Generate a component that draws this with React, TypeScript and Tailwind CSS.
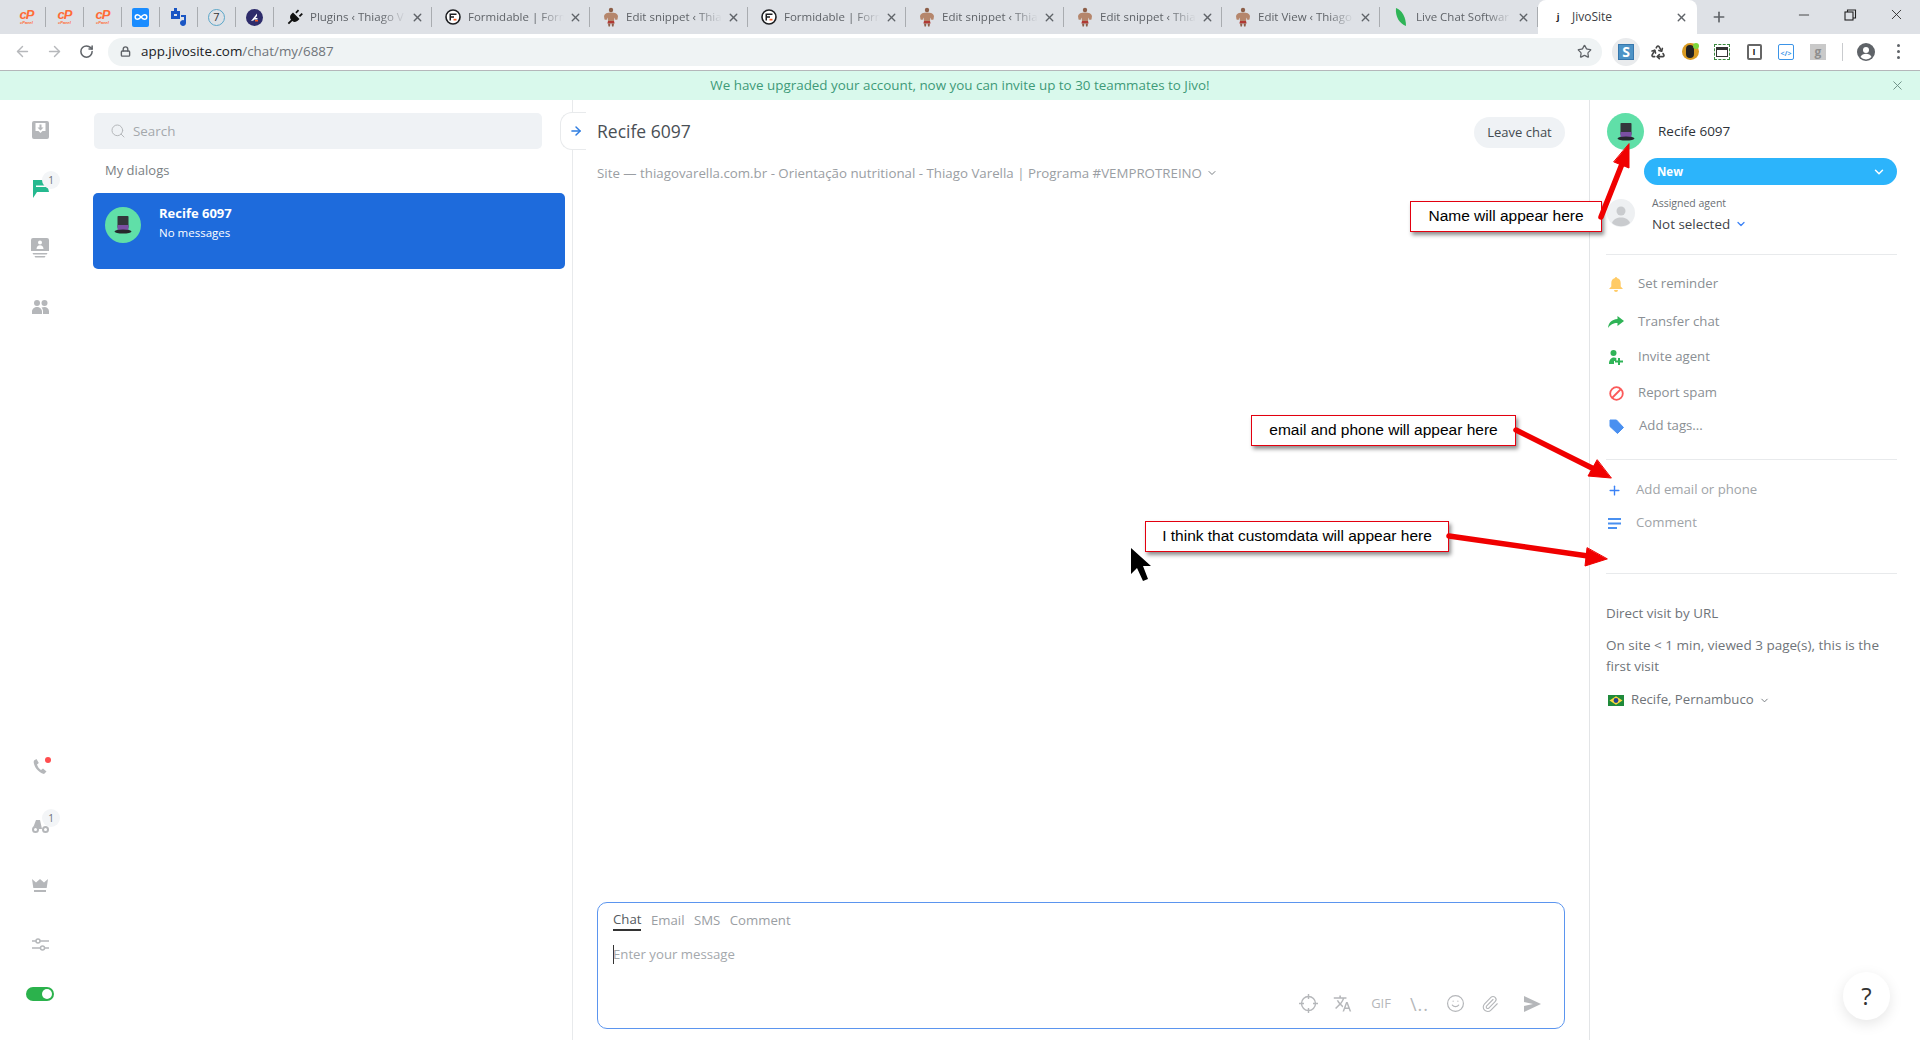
import React from 'react';
import {
  ArrowLeft,
  ArrowRight,
  ChevronDown,
  Infinity as InfinityIcon,
  Lock,
  Minus,
  Paperclip,
  Plus,
  Recycle,
  RotateCw,
  Search,
  Smile,
  Star,
  X,
} from 'lucide-react';
import { MdTranslate } from 'react-icons/md';

const Hat = ({ size = 20 }: { size?: number }) => (
  <svg width={size} height={size} viewBox="0 0 20 20">
    <rect x="4.5" y="1" width="11" height="12" rx="0.8" fill="#33363b" />
    <rect x="4.5" y="10" width="11" height="6" fill="#7b4fa3" />
    <ellipse cx="10" cy="16.5" rx="8.5" ry="2" fill="#26282c" />
  </svg>
);

const CPanel = () => (
  <div className="flex flex-col items-center leading-none text-[#ff6c37]">
    <span className="font-['Liberation_Sans',sans-serif] text-[13px] font-bold italic tracking-[-1px] leading-[11px]">cP</span>
    <span className="font-['Liberation_Sans',sans-serif] text-[4px] font-bold italic leading-[5px]">cPanel</span>
  </div>
);

const Muscle = () => (
  <svg width="16" height="20" viewBox="0 0 16 20">
    <circle cx="8" cy="3" r="2.2" fill="#8d5f49" />
    <path d="M1 9c.5-2.500 3-3.500 7-3.500S14.500 6.500 15 9l-.5 3.500-2 .5-1-2.500L11 14H5l-.5-3.500-1 2.500-2-.5z" fill="#b5866c" />
    <path d="M5 14h6l.6 2.500H4.400z" fill="#b13a34" />
    <path d="M5 16.500h2.400L7 19.500H5.500zM8.600 16.500H11l-.5 3H9z" fill="#8d5f49" />
  </svg>
);

const Formidable = () => (
  <svg width="16" height="16" viewBox="0 0 16 16">
    <circle cx="8" cy="8" r="7" fill="#fff" stroke="#1d1f22" strokeWidth="1.6" />
    <path d="M4.500 4.500h7V6h-7zM4.500 7.300H9v1.500H4.500zM4.500 4.500H6v7H4.500z" fill="#1d1f22" />
    <rect x="8.5" y="9.8" width="3" height="1.7" fill="#f15a24" />
  </svg>
);

const Plug = () => (
  <svg width="18" height="18" viewBox="0 0 18 18" fill="#111">
    <path d="M7 4.500 13.500 11l-1.800 1.800c-1.600 1.500-3.900 1.500-5.400.2L3 16.300 1.700 15 5 11.700c-1.300-1.500-1.300-3.800.2-5.400z" />
    <path d="m9.300 4.200 2.600-2.800 1.300 1.300-2.700 2.700zM12.800 7.700l2.800-2.700 1.300 1.300-2.800 2.700z" />
  </svg>
);

const Leaf = () => (
  <svg width="14" height="20" viewBox="0 0 14 20">
    <path d="M2 1c6 2 10 9 10 18C6 17 1 10 2 1z" fill="#2fb457" />
  </svg>
);

const tabs = [
  { icon: <Plug />, title: 'Plugins ‹ Thiago V' },
  { icon: <Formidable />, title: 'Formidable | Form' },
  { icon: <Muscle />, title: 'Edit snippet ‹ Thia' },
  { icon: <Formidable />, title: 'Formidable | Form' },
  { icon: <Muscle />, title: 'Edit snippet ‹ Thia' },
  { icon: <Muscle />, title: 'Edit snippet ‹ Thia' },
  { icon: <Muscle />, title: 'Edit View ‹ Thiago' },
  { icon: <Leaf />, title: 'Live Chat Softwar' },
];

const Pinned = ({ children }: { children: React.ReactNode }) => (
  <div className="flex h-[34px] w-[38px] items-center justify-center">
    <div className="flex h-[20px] w-[37px] items-center justify-center border-r border-[#a9acb0]">{children}</div>
  </div>
);

const TabStrip = () => (
  <div className="flex h-[34px] shrink-0 items-center bg-[#dee1e6] pl-[8px]">
    <Pinned><CPanel /></Pinned>
    <Pinned><CPanel /></Pinned>
    <Pinned><CPanel /></Pinned>
    <Pinned>
      <div className="flex h-[19px] w-[17px] items-center justify-center rounded-[2px] bg-[#1a8cff]">
        <InfinityIcon size={14} color="#fff" strokeWidth={2.5} />
      </div>
    </Pinned>
    <Pinned>
      <svg width="18" height="20" viewBox="0 0 18 20" fill="#1a56c4">
        <path d="M1 4h3V1h3v3h3v8H1zm3 3v2h3V7z" fillRule="evenodd" />
        <path d="M11 8h5v8a3 3 0 1 1-2-2.800V10h-3z" />
      </svg>
    </Pinned>
    <Pinned>
      <div className="flex h-[17px] w-[17px] items-center justify-center rounded-full border border-[#5aa6c9] text-[11px] text-[#333]">7</div>
    </Pinned>
    <Pinned>
      <svg width="17" height="17" viewBox="0 0 17 17">
        <circle cx="8.5" cy="8.5" r="8.5" fill="#2e2c6b" />
        <path d="M5 12 11 4.500v2.500L7.500 11.500zM8 9h3.500v1.500H8z" fill="#fff" />
        <rect x="9" y="11" width="3" height="1.5" fill="#f15a24" />
      </svg>
    </Pinned>
    {tabs.map((tab, i) => (
      <div key={i} className="flex h-[34px] w-[158px] items-center">
        <div className="flex h-[20px] w-full items-center border-r border-[#a9acb0] pl-[12px] pr-[7px]">
          <div className="flex w-[18px] shrink-0 justify-center">{tab.icon}</div>
          <span className="ml-[6px] w-[100px] overflow-hidden whitespace-nowrap text-[11.5px] text-[#5f6368] [mask-image:linear-gradient(to_right,black_70%,transparent_96%)]">
            {tab.title}
          </span>
          <X size={13} strokeWidth={2.5} className="ml-auto text-[#5f6368]" />
        </div>
      </div>
    ))}
    <div className="flex h-[34px] w-[159px] shrink-0 items-center self-end rounded-t-[8px] bg-white pl-[16px] pr-[9px]">
      <div className="flex h-[14px] w-[8px] items-center justify-center text-[9px] font-bold text-[#222]">j</div>
      <span className="ml-[10px] text-[12px] text-[#3c4043]">JivoSite</span>
      <X size={13} strokeWidth={2.5} className="ml-auto text-[#5f6368]" />
    </div>
    <Plus size={16} strokeWidth={2.5} className="ml-[14px] text-[#5f6368]" />
    <div className="-mt-[5px] ml-auto flex items-center gap-[30px] pr-[15px] text-[#222]">
      <Minus size={16} strokeWidth={1.2} />
      <svg width="16" height="16" viewBox="0 0 16 16" fill="none" stroke="#222" strokeWidth="1.1">
        <rect x="3" y="5" width="8" height="8" />
        <path d="M5.500 5V3h8v8h-2.500" />
      </svg>
      <X size={17} strokeWidth={1.2} />
    </div>
  </div>
);

const ExtBox = ({ children }: { children: React.ReactNode }) => (
  <div className="flex h-[28px] w-[32px] items-center justify-center">{children}</div>
);

const Toolbar = () => (
  <div className="flex h-[37px] shrink-0 items-center border-b border-[#b5b7ba] bg-white pb-[1px]">
    <ArrowLeft size={17} strokeWidth={2} className="ml-[14px] text-[#b6b8bb]" />
    <ArrowRight size={17} strokeWidth={2} className="ml-[15px] text-[#b6b8bb]" />
    <RotateCw size={15} strokeWidth={2.4} className="ml-[16px] text-[#5f6368]" />
    <div className="ml-[14px] flex h-[28px] w-[1494px] items-center rounded-full bg-[#eff3f4] pl-[12px] pr-[10px]">
      <Lock size={11} strokeWidth={3} className="text-[#5f6368]" />
      <span className="ml-[10px] text-[13.4px] text-[#202124]">
        app.jivosite.com<span className="text-[#70757a]">/chat/my/6887</span>
      </span>
      <Star size={15} strokeWidth={2} className="ml-auto text-[#5f6368]" />
    </div>
    <div className="ml-[10px] flex items-center">
      <div className="mr-[2px] flex h-[28px] w-[28px] items-center justify-center rounded-full bg-[#e9ebed]">
        <div className="flex h-[16px] w-[16px] items-center justify-center border border-[#3677ad] bg-[#4d93c6] text-[14px] font-bold leading-none text-white">S</div>
      </div>
      <ExtBox><Recycle size={16} strokeWidth={2.4} className="text-[#444]" /></ExtBox>
      <ExtBox>
        <div className="relative h-[17px] w-[17px] rounded-full bg-[#d99a20]">
          <div className="absolute left-[4px] top-[2px] h-[13px] w-[8px] rounded-sm bg-[#222]" />
          <div className="absolute right-0 top-0 h-[6px] w-[6px] rounded-full bg-[#7cd63b]" />
        </div>
      </ExtBox>
      <ExtBox>
        <div className="flex h-[16px] w-[16px] items-center justify-center border border-dashed border-[#3d8b40]">
          <div className="h-[10px] w-[12px] border border-t-[3px] border-[#333] bg-white" />
        </div>
      </ExtBox>
      <ExtBox>
        <div className="flex h-[16px] w-[15px] items-center justify-center rounded-[2px] border-2 border-[#666] text-[9px] font-bold leading-none text-[#222]">I</div>
      </ExtBox>
      <ExtBox>
        <div className="flex h-[16px] w-[16px] items-end justify-center rounded-[2px] border border-[#3b94e8] text-[7px] font-bold leading-[11px] text-[#3b94e8]">{'</>'}</div>
      </ExtBox>
      <ExtBox>
        <div className="flex h-[16px] w-[16px] items-center justify-center bg-[#c9c9c9] text-[12px] font-bold leading-none text-[#8e8e8e]">g</div>
      </ExtBox>
      <div className="ml-[8px] h-[18px] w-px bg-[#c9cbce]" />
      <svg width="18" height="18" viewBox="0 0 18 18" className="ml-[14px]">
        <circle cx="9" cy="9" r="9" fill="#5f6368" />
        <circle cx="9" cy="7" r="3" fill="#fff" />
        <path d="M3.500 14c1-2.500 3-3.300 5.500-3.300s4.500.8 5.500 3.300A7.500 7.500 0 0 1 9 16.500 7.500 7.500 0 0 1 3.500 14z" fill="#fff" />
      </svg>
      <div className="ml-[22px] flex flex-col gap-[3px]">
        <div className="h-[3px] w-[3px] rounded-full bg-[#5f6368]" />
        <div className="h-[3px] w-[3px] rounded-full bg-[#5f6368]" />
        <div className="h-[3px] w-[3px] rounded-full bg-[#5f6368]" />
      </div>
    </div>
  </div>
);

const RailItem = ({ children }: { children: React.ReactNode }) => (
  <div className="relative flex h-[59px] w-full items-center justify-center">{children}</div>
);

const Badge = () => (
  <div className="absolute left-[42px] top-[12px] flex h-[18px] w-[18px] items-center justify-center rounded-full bg-[#f3f5f7] text-[10px] text-[#6b7075]">1</div>
);

const Rail = () => (
  <div className="flex w-[82px] shrink-0 flex-col justify-between pb-[39px] pr-[2px]">
    <div>
      <RailItem>
        <svg width="17" height="18" viewBox="0 0 17 18">
          <path d="M2 0h13a2 2 0 0 1 2 2v14a2 2 0 0 1-2 2H2a2 2 0 0 1-2-2V2a2 2 0 0 1 2-2zm1.500 2v8h3l2 2 2-2h3V2z" fill="#b5b7ba" fillRule="evenodd" />
          <path d="M7.500 3.500h2v3h2l-3 3-3-3h2z" fill="#b5b7ba" />
        </svg>
      </RailItem>
      <RailItem>
        <svg width="17" height="18" viewBox="0 0 17 18" className="mt-[1px]">
          <path d="M1 0h13l3 12H5l-4 6z" fill="#25b98f" />
          <path d="M4 5.500h13V7H4z" fill="#fff" />
        </svg>
        <Badge />
      </RailItem>
      <RailItem>
        <svg width="18" height="20" viewBox="0 0 18 20" fill="#b5b7ba">
          <path d="M2 0h14a2 2 0 0 1 2 2v11H0V2a2 2 0 0 1 2-2zm7 2.500a2 2 0 1 0 0 4 2 2 0 0 0 0-4zM5.500 11h7c0-2.500-1.500-3.800-3.500-3.800S5.500 8.500 5.500 11z" fillRule="evenodd" />
          <path d="M1.500 15h15l-.8 1.600H2.300zM3.500 18h11l-.8 1.600H4.300z" />
        </svg>
      </RailItem>
      <RailItem>
        <svg width="17" height="14" viewBox="0 0 17 14" fill="#b5b7ba">
          <circle cx="5" cy="3" r="3" />
          <circle cx="12.5" cy="3" r="3" />
          <path d="M0 14v-2.500C0 8.800 2.500 7 5 7s5 1.800 5 4.500V14zM11 14v-2.500c0-1.600-.6-2.900-1.500-3.900.9-.4 2-.6 3-.6 2.300 0 4.500 1.700 4.500 4.200V14z" />
        </svg>
      </RailItem>
    </div>
    <div className="flex flex-col items-center">
      <RailItem>
        <svg width="14" height="15" viewBox="0 0 14 15" fill="#b5b7ba" className="-mt-[2px]">
          <path d="M3.500 0 1 1.500C-.5 5 4 13.500 11 15l2.500-2.500L10 9.500 8 11C6.300 10 4.500 7.500 4 5.500L5.800 4z" />
        </svg>
        <div className="absolute left-[45px] top-[19px] h-[6px] w-[6px] rounded-full bg-[#ff4d4f]" />
      </RailItem>
      <RailItem>
        <svg width="17" height="13" viewBox="0 0 17 13">
          <circle cx="3.500" cy="9.500" r="2.500" fill="none" stroke="#b5b7ba" strokeWidth="2" />
          <circle cx="13.500" cy="9.500" r="2.500" fill="none" stroke="#b5b7ba" strokeWidth="2" />
          <path d="M1 8 4 0h4l2 9H6.500a3 3 0 0 0-5.500-1z" fill="#b5b7ba" />
        </svg>
        <Badge />
      </RailItem>
      <RailItem>
        <svg width="16" height="13" viewBox="0 0 16 13" fill="#b5b7ba">
          <path d="M0 0l4 3.500L8 0l4 3.500L16 0l-1.300 9H1.300z" />
          <rect x="2" y="11" width="12" height="2" />
        </svg>
      </RailItem>
      <RailItem>
        <svg width="17" height="15" viewBox="0 0 17 15" fill="none" stroke="#b5b7ba" strokeWidth="1.5">
          <path d="M0 4h4M8 4h9M0 11h8.500M12.500 11H17" />
          <circle cx="6" cy="4" r="2" />
          <circle cx="10.5" cy="11" r="2" />
        </svg>
      </RailItem>
      <div className="mt-[13px] flex h-[14px] w-[28px] items-center justify-end rounded-full bg-[#2bb24c] pr-[2px]">
        <div className="h-[10px] w-[10px] rounded-full bg-white" />
      </div>
    </div>
  </div>
);

const DialogList = () => (
  <div className="w-[491px] shrink-0 border-r border-[#e8eaec]">
    <div className="ml-[12px] mt-[13px] flex h-[36px] w-[448px] items-center rounded-[5px] bg-[#eff2f5] pl-[16px]">
      <Search size={16} strokeWidth={1.5} className="text-[#b5b8bb]" />
      <span className="ml-[7px] text-[13.4px] text-[#a4a8ac]">Search</span>
    </div>
    <p className="ml-[23px] mt-[10px] text-[13px] leading-[22px] text-[#7a7f84]">My dialogs</p>
    <div className="ml-[11px] mt-[12px] flex h-[76px] w-[472px] rounded-[5px] bg-[#1e6bdc] pl-[12px] pt-[14px] text-white">
      <div className="flex h-[36px] w-[36px] items-center justify-center rounded-full bg-[#60dfa8]">
        <Hat size={20} />
      </div>
      <div className="ml-[18px]">
        <p className="-mt-[4px] text-[13px] font-bold leading-[20px]">Recife 6097</p>
        <p className="mt-[1px] text-[11.5px] leading-[18px]">No messages</p>
      </div>
    </div>
  </div>
);

const ChatPanel = () => (
  <div className="relative flex min-w-0 flex-1 flex-col px-[24px]">
    <div className="absolute -left-[13px] top-[12px] flex h-[38px] w-[26px] items-center rounded-l-[12px] border-y border-l border-[#e8eaec] bg-white pl-[8px]">
      <ArrowRight size={14} strokeWidth={2.5} className="text-[#2f7de1]" />
    </div>
    <div className="flex items-start justify-between pt-[17px]">
      <h1 className="mt-[2px] text-[17.5px] font-medium leading-[24px] text-[#4a4f55]">Recife 6097</h1>
      <div className="flex h-[31px] w-[91px] items-center justify-center rounded-full bg-[#eff2f5] text-[13px] font-medium text-[#444a50]">Leave chat</div>
    </div>
    <div className="mt-[15px] flex items-center text-[13.3px] leading-[20px] text-[#9a9ea3]">
      Site — thiagovarella.com.br - Orientação nutritional - Thiago Varella | Programa #VEMPROTREINO
      <ChevronDown size={12} strokeWidth={2} className="ml-[4px] text-[#7a7f84]" />
    </div>
    <div className="mb-[11px] mt-auto flex h-[127px] flex-col rounded-[10px] border border-[#5b95ef] px-[15px] pt-[7px]">
      <div className="flex gap-[9.5px] text-[13.2px] leading-[20px] text-[#9a9ea3]">
        <span className="border-b-2 border-[#333] leading-[19px] text-[#555a60]">Chat</span>
        <span>Email</span>
        <span>SMS</span>
        <span>Comment</span>
      </div>
      <div className="mt-[13px] flex items-center text-[13.2px] leading-[20px] text-[#a4a8ac]">
        <div className="-mr-px h-[19px] w-px bg-[#333]" />
        Enter your message
      </div>
      <div className="mt-auto flex items-center justify-end gap-[16px] pb-[14px] pr-[8px] text-[#b5b7ba]">
        <svg width="21" height="21" viewBox="0 0 21 21" fill="none" stroke="#b5b7ba" strokeWidth="1.4">
          <circle cx="10.5" cy="10.5" r="7" />
          <path d="M10.5 1v5M10.5 15v5M1 10.500h5M15 10.500h5" />
        </svg>
        <MdTranslate size={19} className="-ml-[2px]" />
        <span className="ml-[3px] text-[13px] leading-none">GIF</span>
        <span className="ml-[3px] text-[18px] leading-none tracking-[1px]">\..</span>
        <Smile size={19} strokeWidth={1.5} className="ml-[1px]" />
        <Paperclip size={18} strokeWidth={1.5} />
        <svg width="17" height="16" viewBox="0 0 17 16" fill="#b5b7ba" className="ml-[9px]">
          <path d="M0 0l17 8L0 16V10l9-2-9-2z" />
        </svg>
      </div>
    </div>
  </div>
);

const actions = [
  {
    label: 'Set reminder',
    mt: 'mt-[17px]',
    textMl: 'ml-[13px]',
    icon: (
      <svg width="14" height="15" viewBox="0 0 14 15" fill="#ffcb66">
        <path d="M7 0a1 1 0 0 1 1 1c2.500.5 3.700 2.500 3.700 5v3.500L14 12H0l2.300-2.500V6C2.300 3.500 3.500 1.500 6 1a1 1 0 0 1 1-1zM5 13h4a2 2 0 0 1-4 0z" />
      </svg>
    ),
  },
  {
    label: 'Transfer chat',
    mt: 'mt-[14px]',
    textMl: 'ml-[13px]',
    icon: (
      <svg width="16" height="12" viewBox="0 0 16 12" fill="#2fb457">
        <path d="M9.500 0 16 5l-6.500 5V7C5 7 2.500 8.500 0 12c.5-5 3.500-8.500 9.500-9z" />
      </svg>
    ),
  },
  {
    label: 'Invite agent',
    mt: 'mt-[11px]',
    textMl: 'ml-[13px]',
    icon: (
      <svg width="14" height="15" viewBox="0 0 14 15" fill="#2fb457">
        <circle cx="4.5" cy="3" r="3" />
        <path d="M0 14c0-4 2-6.500 5-6.500 1 0 1.700.2 2.300.6V11H5v3z" />
        <path d="M9 8h2v2.500h3v2h-3V15H9v-2.500H6v-2h3z" />
      </svg>
    ),
  },
  {
    label: 'Report spam',
    mt: 'mt-[12px]',
    textMl: 'ml-[13px]',
    icon: (
      <svg width="15" height="15" viewBox="0 0 15 15" fill="none" stroke="#fb5a5a" strokeWidth="1.8">
        <circle cx="7.5" cy="7.5" r="6.3" />
        <path d="M3 12 12 3" />
      </svg>
    ),
  },
  {
    label: 'Add tags...',
    mt: 'mt-[9px]',
    textMl: 'ml-[14px]',
    icon: (
      <svg width="15" height="15" viewBox="0 0 15 15" fill="#4a90f0">
        <path d="M1 1h6.500L14.500 8.500 8.500 14.500 1 7.500z" strokeLinejoin="round" stroke="#4a90f0" />
      </svg>
    ),
  },
];

const DetailsPanel = () => (
  <div className="flex w-[331px] shrink-0 flex-col border-l border-[#e3e5e7] pl-[16px] pr-[23px] pt-[13px]">
    <div className="ml-[1px] flex items-center">
      <div className="flex h-[37px] w-[37px] items-center justify-center rounded-full bg-[#60dfa8]">
        <Hat size={20} />
      </div>
      <span className="ml-[14px] text-[13.5px] font-medium text-[#2e3338]">Recife 6097</span>
    </div>
    <div className="ml-[38px] mt-[8px] flex h-[27px] items-center justify-between rounded-full bg-[#2cb4fb] pl-[13px] pr-[11px] text-[11.5px] font-bold text-white">
      New
      <ChevronDown size={14} strokeWidth={2.5} />
    </div>
    <div className="mt-[14px] flex items-start">
      <svg width="28" height="28" viewBox="0 0 28 28" className="ml-[1px]">
        <circle cx="14" cy="14" r="14" fill="#eef0f2" />
        <circle cx="14" cy="12" r="4.5" fill="#c9cbce" />
        <path d="M5 24c1.500-4 5-5.500 9-5.500s7.500 1.500 9 5.500a14 14 0 0 1-18 0z" fill="#c9cbce" />
      </svg>
      <div className="-mt-[3px] ml-[17px]">
        <p className="text-[10.5px] leading-[14px] text-[#6a6f74]">Assigned agent</p>
        <p className="mt-[4px] flex items-center text-[13.4px] leading-[20px] text-[#3e4348]">
          Not selected
          <ChevronDown size={12} strokeWidth={2.5} className="ml-[5px] text-[#3b82f6]" />
        </p>
      </div>
    </div>
    <div className="mt-[20px] h-px bg-[#e8eaec]" />
    {actions.map((a) => (
      <div key={a.label} className={`${a.mt} ml-[1px] flex h-[24px] items-center text-[13.2px] text-[#8a8f94]`}>
        <div className="flex w-[18px] justify-center">{a.icon}</div>
        <span className={a.textMl}>{a.label}</span>
      </div>
    ))}
    <div className="mt-[21px] h-px bg-[#e8eaec]" />
    <div className="mt-[18px] flex h-[24px] items-center text-[13.2px] text-[#a0a4a8]">
      <Plus size={15} strokeWidth={2.2} className="ml-[1px] text-[#3b82f6]" />
      <span className="ml-[14px]">Add email or phone</span>
    </div>
    <div className="mt-[9px] flex h-[24px] items-center text-[13.2px] text-[#a0a4a8]">
      <svg width="13" height="11" viewBox="0 0 13 11" fill="#4a90f0" className="ml-[2px]">
        <rect width="13" height="2" />
        <rect y="4.5" width="13" height="2" />
        <rect y="9" width="9" height="2" />
      </svg>
      <span className="ml-[15px]">Comment</span>
    </div>
    <div className="mt-[38px] h-px bg-[#e8eaec]" />
    <p className="mt-[28px] text-[13.4px] leading-[22px] text-[#6f7479]">Direct visit by URL</p>
    <p className="mt-[11px] text-[13.5px] leading-[21px] text-[#6f7479]">On site &lt; 1 min, viewed 3 page(s), this is the first visit</p>
    <div className="mt-[11px] flex h-[24px] items-center text-[13.2px] text-[#6f7479]">
      <svg width="16" height="11" viewBox="0 0 16 11" className="ml-[2px]">
        <rect width="16" height="11" fill="#1f8a3b" />
        <path d="M8 1.300 14.500 5.500 8 9.700 1.500 5.500z" fill="#ffd83d" />
        <circle cx="8" cy="5.5" r="2.4" fill="#24408e" />
      </svg>
      <span className="ml-[7px]">Recife, Pernambuco</span>
      <ChevronDown size={11} strokeWidth={2} className="ml-[5px]" />
    </div>
  </div>
);

const Callout = ({ text, className }: { text: string; className: string }) => (
  <div className={`absolute flex h-[31px] items-center justify-center border border-[#e3000f] bg-white pb-[1px] font-['Liberation_Sans',sans-serif] text-[15.5px] text-black shadow-[2px_3px_4px_rgba(0,0,0,0.45)] ${className}`}>
    {text}
  </div>
);

const Annotations = () => (
  <>
    <Callout text="Name will appear here" className="left-[1410px] top-[201px] w-[192px]" />
    <Callout text="email and phone will appear here" className="left-[1251px] top-[415px] w-[265px]" />
    <Callout text="I think that customdata will appear here" className="left-[1145px] top-[521px] w-[304px]" />
    <svg className="pointer-events-none absolute left-0 top-0" width="1920" height="1040" viewBox="0 0 1920 1040">
      <g fill="#f00000" stroke="#f00000" strokeLinecap="round">
        <path d="M1601 217 1622 164" strokeWidth="5.5" fill="none" />
        <path d="M1629 144 1629 168 1614 162z" />
        <path d="M1516 430 1596 470" strokeWidth="5.5" fill="none" />
        <path d="M1611 478 1588 476 1597 460z" />
        <path d="M1449 536 1588 556" strokeWidth="5.5" fill="none" />
        <path d="M1607 559 1585 566 1587 548z" />
      </g>
      <path d="M1131 548 1131 574 1137 568 1143 581 1148 579 1143 566 1151 566z" fill="#000" />
    </svg>
  </>
);

const HelpButton = () => (
  <div className="absolute left-[1843px] top-[972px] flex h-[48px] w-[47px] items-center justify-center rounded-full bg-white text-[24px] text-[#333] shadow-[0_4px_14px_rgba(0,0,0,0.1)]">?</div>
);

const App = () => {
  return (
    <div className="relative flex h-screen w-full flex-col overflow-hidden bg-white font-['Open_Sans',sans-serif]">
      <TabStrip />
      <Toolbar />
      <div className="flex h-[29px] shrink-0 items-center justify-center bg-[#d9f9ec] text-[13.4px] text-[#3e9a78]">
        We have upgraded your account, now you can invite up to 30 teammates to Jivo!
        <X size={15} strokeWidth={1.5} className="absolute right-[15px] text-[#6b8f84]" />
      </div>
      <div className="flex min-h-0 flex-1">
        <Rail />
        <DialogList />
        <ChatPanel />
        <DetailsPanel />
      </div>
      <Annotations />
      <HelpButton />
    </div>
  );
};

export default App;
